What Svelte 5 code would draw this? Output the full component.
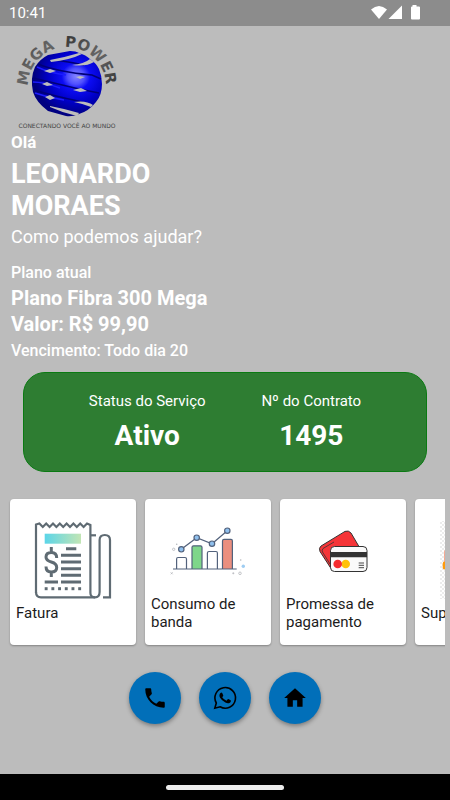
<script lang="ts">
  type Action = { id: string; label: string }

  const customer = { name: 'LEONARDO MORAES', contract: '1495', status: 'Ativo' }
  const plan = { name: 'Plano Fibra 300 Mega', price: 'R$ 99,90', due: 'Todo dia 20' }

  const actions: Action[] = [
    { id: 'invoice', label: 'Fatura' },
    { id: 'usage', label: 'Consumo de banda' },
    { id: 'promise', label: 'Promessa de pagamento' },
    { id: 'support', label: 'Suporte' },
  ]

  const dots = [0, 1, 2, 3, 4, 5]
</script>

<div class="screen">
  <header class="statusbar">
    <span>10:41</span>
    <svg width="52" height="16" viewBox="0 0 52 16" fill="#fff" aria-hidden="true">
      <path d="M0 4.500 Q8 -2.500 16 4.500 L8 14 Z" />
      <path d="M17.500 14 L31 0.500 V14 Z" />
      <path d="M41.500 0 h4 v1.500 h2.500 q1 0 1 1 v11 q0 1 -1 1 h-7 q-1 0 -1 -1 v-11 q0 -1 1 -1 h0.500 z" />
    </svg>
  </header>

  <main>
    <svg class="logo" width="112" height="100" viewBox="11 31 112 100" role="img" aria-label="Mega Power">
      <defs>
        <radialGradient id="globe" cx="0.63" cy="0.39" r="0.6">
          <stop offset="0" stop-color="#8484ff" />
          <stop offset="0.2" stop-color="#5050ff" />
          <stop offset="0.34" stop-color="#0c0cf4" />
          <stop offset="0.65" stop-color="#0000c8" />
          <stop offset="1" stop-color="#000080" />
        </radialGradient>
        <linearGradient id="steel" x1="0" y1="0" x2="1" y2="1">
          <stop offset="0" stop-color="#333" />
          <stop offset="0.5" stop-color="#666" />
          <stop offset="1" stop-color="#333" />
        </linearGradient>
        <path id="arc" d="M28 86 A39 39 0 0 1 106 86" />
      </defs>
      <path
        fill="url(#globe)"
        d="M48 55 L70 51 Q76 51 79 53 Q86 55 90 59 Q96 63 99 69 Q102 76 102 84 Q102 95 96 102 Q89 111 79 114 Q72 117 66 116 L48 111 Q36 102 33 92 Q30 78 35 67 Q40 59 48 55 Z"
      />
      <g fill="none" stroke="#000078" stroke-width="1.500">
        <path d="M38 64 Q58 72 92 75 L101 79" />
        <path d="M33 78 Q54 83 79 89 L99 93" />
        <path d="M34 90 Q54 96 78 101 L92 106" />
        <path d="M55 60 Q70 62 84 65" />
      </g>
      <g fill="none" stroke="#1c1cff" stroke-width="1.500">
        <path d="M37 67 Q50 73 66 75" />
        <path d="M33 82 Q44 82 60 88" />
        <path d="M35 93 Q49 98 64 100" />
      </g>
      <g fill="#bcbcbc">
        <path d="M50 60 Q66 57 79 53 L82 54 Q70 60 51 62 Z" />
        <path d="M72 65 Q84 64 90 59 L94 62 Q86 67 72 65 Z" />
        <path d="M44 71 L50 69 L56 71 L50 73 Z" />
        <path d="M76 77 L80 76 L85 77 L80 79 Z" />
        <path d="M42 84 L47 82 L53 85 L47 86 Z" />
        <path d="M73 90 L81 88 L87 91 L80 92 Z" />
        <path d="M45 97 L50 95 L55 98 L50 100 Z" />
        <path d="M74 102 Q86 100 93 105 L91 107 Q84 104 74 102 Z" />
        <path d="M50 106 Q66 109 79 113 L77 116 Q63 113 50 107 Z" />
      </g>
      <g class="brand" fill="url(#steel)">
        <text><textPath href="#arc" startOffset="0">MEGA</textPath></text>
        <text><textPath href="#arc" startOffset="59">POWER</textPath></text>
      </g>
      <text class="tagline" x="67" y="128" text-anchor="middle">CONECTANDO VOCÊ AO MUNDO</text>
    </svg>

    <section class="intro">
      <p class="hello">Olá</p>
      <h1>{customer.name}</h1>
      <p class="question">Como podemos ajudar?</p>
    </section>

    <section class="plan">
      <p class="small">Plano atual</p>
      <p class="large">{plan.name}</p>
      <p class="large">Valor: {plan.price}</p>
      <p class="small due">Vencimento: {plan.due}</p>
    </section>

    <dl class="service">
      <div>
        <dt>Status do Serviço</dt>
        <dd>{customer.status}</dd>
      </div>
      <div>
        <dt>Nº do Contrato</dt>
        <dd>{customer.contract}</dd>
      </div>
    </dl>

    <div class="carousel">
      {#each actions as action}
        <button class="card">
          <svg width="80" height="80" viewBox="0 0 80 80" fill="none" aria-hidden="true">
            {#if action.id === 'invoice'}
              <defs>
                <linearGradient id="band">
                  <stop offset="0" stop-color="#5bd5e8" />
                  <stop offset="1" stop-color="#c2e5b4" />
                </linearGradient>
              </defs>
              <rect x="11.700" y="13.700" width="36.300" height="10" fill="url(#band)" />
              <g stroke="#5f6b73" stroke-width="2.200">
                <path d="M3 73 V4.500 L6.400 3.500 L9.800 7 L13.200 3.500 L16.600 7 L20 3.500 L23.400 7 L26.800 3.500 L30.200 7 L33.600 3.500 L37 7 L40.400 3.500 L43.800 7 L47.200 3.500 L50.600 7 L54 3.500 L57.400 5 V73 Q57.400 77.300 62 77.300 Q66.600 77.300 66.600 72 V20 Q66.600 15 71.800 15 Q77 15 77 20 V77.300 H70" />
                <path d="M3 72 Q3 77.300 8 77.300 H62" />
                <path d="M57 15.300 H63" />
              </g>
              <g stroke="#5f6b73" stroke-width="3">
                <path d="M33 28.700 H43.300 M28 35.300 H48 M28 42 H48 M28 48.700 H48 M28 55.300 H48 M28 62 H48 M11.700 62 H25" />
                <path d="M18.300 27 V32 M18.300 52 V57 M23.700 38 Q23.700 32.500 18.300 32.500 Q13 32.500 13 37 Q13 40.500 18.300 42 Q23.700 43.500 23.700 47.500 Q23.700 52 18.300 52 Q13 52 13 46.500" />
              </g>
              {#each dots as dot}
                <rect x={11.7 + dot * 6.7} y="67.200" width="2.900" height="3" fill="#5f6b73" />
              {/each}
            {:else if action.id === 'usage'}
              <g stroke="#53627c" stroke-width="1.200">
                <path fill="#fff" d="M8.600 49 V39 Q8.600 37.500 10 37.500 H17 Q18.500 37.500 18.500 39 V49" />
                <path fill="#7ed68a" d="M24 49 V27.300 Q24 25.800 25.500 25.800 H32.500 Q34 25.800 34 27.300 V49" />
                <path fill="#fff" d="M39.400 49 V33 Q39.400 31.500 41 31.500 H48 Q49.400 31.500 49.400 33 V49" />
                <path fill="#eb8f7f" d="M54.500 49 V21 Q54.500 19.400 56 19.400 H63 Q64.400 19.400 64.400 21 V49" />
                <path d="M5 49 H68.700" />
                <path d="M13.300 29.300 L28.700 17.700 L44 23.700 L59.300 10.700" />
                <g fill="#8fc0ee">
                  <circle cx="13.300" cy="29.300" r="2.700" />
                  <circle cx="28.700" cy="17.700" r="2.700" />
                  <circle cx="44" cy="23.700" r="2.700" />
                  <circle cx="59.300" cy="10.700" r="2.700" />
                </g>
              </g>
              <g stroke="#b5b8bd" stroke-width="0.800">
                <circle cx="5.700" cy="29.300" r="1.200" />
                <circle cx="72" cy="53.300" r="1.300" />
                <path d="M2.700 52.300 L4.700 54.300 M4.700 52.300 L2.700 54.300 M64.300 53.300 H66.300 M65.300 52.300 V54.300" />
              </g>
              <circle cx="8.700" cy="24.300" r="0.800" fill="#b5b8bd" />
              <circle cx="72.700" cy="40" r="0.800" fill="#b5b8bd" />
              <circle cx="75.300" cy="46.300" r="1.700" fill="#9fcdf2" />
            {:else if action.id === 'promise'}
              <path
                fill="#f53538"
                stroke="#333"
                d="M18 26 L42 11.400 Q45.500 10 48 13 L58 30 L28 48.500 L17 31.500 Q15.500 28 18 26 Z"
              />
              <path stroke="#333" stroke-width="0.800" d="M31 22 L20 28.500 Q18.500 30 19.500 32 L27 44" />
              <rect x="27.500" y="26.500" width="36.500" height="25" rx="4" fill="#fafafa" stroke="#333" />
              <path fill="#333" d="M28 32 H64 V37.300 H28 Z" />
              <circle cx="42.700" cy="44" r="4.300" fill="#ffc107" />
              <circle cx="34.700" cy="44" r="4.300" fill="#f52c2e" />
              <path stroke="#333" stroke-width="0.900" d="M55.700 43 H61 M55.700 45.300 H61 M55.700 47.700 H61" />
            {:else}
              <defs>
                <pattern id="checks" width="4" height="4" patternUnits="userSpaceOnUse">
                  <path fill="#ececec" d="M0 0 H2 V2 H0 Z M2 2 H4 V4 H2 Z" />
                </pattern>
              </defs>
              <rect x="2" y="1" width="76" height="78" fill="url(#checks)" />
              <path fill="#f58a6b" d="M6.300 42 V32 Q8 22 24 18 H56 Q72 22 74 42 Z" />
              <rect x="4.700" y="41.500" width="14" height="8" rx="2" fill="#ff9a0a" />
              <rect x="61" y="41.500" width="14" height="8" rx="2" fill="#ff9a0a" />
            {/if}
          </svg>
          <span class="label">{action.label}</span>
        </button>
      {/each}
    </div>

    <div class="contacts">
      <button aria-label="Telefone">
        <svg width="26" height="26" viewBox="0 0 24 24" aria-hidden="true">
          <path d="M6.620 10.790c1.440 2.830 3.760 5.140 6.590 6.590l2.200-2.200c.27-.27.67-.36 1.020-.24 1.120.37 2.330.57 3.570.57.55 0 1 .45 1 1V20c0 .55-.45 1-1 1-9.390 0-17-7.610-17-17 0-.55.45-1 1-1h3.500c.55 0 1 .45 1 1 0 1.250.2 2.450.57 3.570.11.35.03.74-.25 1.020l-2.200 2.200z" />
        </svg>
      </button>
      <button aria-label="WhatsApp">
        <svg width="26" height="26" viewBox="0 0 26 26" aria-hidden="true">
          <path fill="none" stroke="#000" stroke-width="1.600" d="M2.800 23.200 L4.300 18 A10.300 10.300 0 1 1 8.100 21.800 Z" />
          <path d="M8.500 8 Q9.500 7.200 10.200 8 L11.300 10.500 Q11.300 11 10.200 12.200 Q12 14.800 14.500 15.800 L15.700 14.300 Q16.200 13.900 16.900 14.300 L18.900 15.400 Q19.100 17.100 17.500 17.900 Q15.700 18.700 13.400 17.500 Q9.700 15.800 8.100 12.800 Q6.600 10 8.500 8 Z" />
        </svg>
      </button>
      <button aria-label="Início">
        <svg width="26" height="26" viewBox="0 0 24 24" aria-hidden="true">
          <path d="M10 20v-6h4v6h5v-8h3L12 3 2 12h3v8z" />
        </svg>
      </button>
    </div>
  </main>

  <footer class="navbar"><span></span></footer>
</div>

<style>
  :global(body) {
    margin: 0;
    background: #bcbcbc;
  }

  .screen {
    display: flex;
    flex-direction: column;
    min-height: 100vh;
    font-family: Roboto, 'Liberation Sans', sans-serif;
    color: #fff;
    background: #bcbcbc;
  }

  .statusbar {
    display: flex;
    justify-content: space-between;
    align-items: center;
    height: 26px;
    padding: 0 27px 0 9px;
    font-size: 15px;
    background: #8c8c8c;
  }

  main {
    flex: 1;
  }

  p,
  h1,
  dl,
  dd {
    margin: 0;
  }

  .logo {
    display: block;
    margin: 5px 11px 0;
  }

  .brand {
    font: bold 15px 'DejaVu Sans', sans-serif;
  }

  .tagline {
    font: 6px 'DejaVu Sans', sans-serif;
    fill: #444;
  }

  .intro,
  .plan {
    padding: 0 11px;
  }

  .hello {
    font-size: 17px;
    font-weight: 700;
    line-height: 22px;
  }

  h1 {
    max-width: 50%;
    margin-top: 5px;
    font-size: 27px;
    font-weight: 700;
    line-height: 32px;
  }

  .question {
    margin-top: 3px;
    font-size: 18px;
    line-height: 24px;
  }

  .plan {
    margin-top: 12px;
  }

  .small {
    font-size: 16px;
    font-weight: 500;
    line-height: 24px;
  }

  .large {
    font-size: 20px;
    font-weight: 700;
    line-height: 26px;
  }

  .due {
    margin-top: 2px;
  }

  .service {
    display: flex;
    justify-content: space-evenly;
    box-sizing: border-box;
    height: 100px;
    margin: 9px 23px 0;
    padding: 17px 9px;
    text-align: center;
    background: #2e7d32;
    border: 1px solid #0a7a12;
    border-radius: 22px;
  }

  dt {
    font-size: 15px;
    line-height: 22px;
  }

  dd {
    margin-top: 8px;
    font-size: 28px;
    font-weight: 700;
    line-height: 32px;
  }

  .carousel {
    display: flex;
    gap: 9px;
    margin: 22px 5px 0;
    padding: 5px;
    overflow-x: auto;
    scrollbar-width: none;
  }

  .card {
    display: flex;
    flex: none;
    flex-direction: column;
    align-items: center;
    width: 126px;
    height: 146px;
    padding: 21px 6px 19px;
    font: inherit;
    color: #1c1c1c;
    text-align: left;
    background: #fff;
    border: none;
    border-radius: 4px;
    box-shadow: 0 1px 2px rgba(0, 0, 0, 0.3);
    cursor: pointer;
  }

  .card svg {
    flex: none;
  }

  .label {
    display: flex;
    align-items: center;
    align-self: stretch;
    height: 26px;
    font-size: 15px;
    line-height: 18px;
  }

  .contacts {
    display: flex;
    justify-content: center;
    gap: 18px;
    padding: 22px 0;
  }

  .contacts button {
    display: grid;
    place-items: center;
    width: 52px;
    height: 52px;
    padding: 0;
    background: #016fb9;
    border: none;
    border-radius: 50%;
    box-shadow: 0 2px 4px rgba(0, 0, 0, 0.35);
    cursor: pointer;
  }

  .navbar {
    display: grid;
    place-items: center;
    height: 26px;
    background: #000;
  }

  .navbar span {
    width: 118px;
    height: 5px;
    background: #ececec;
    border-radius: 3px;
  }
</style>
